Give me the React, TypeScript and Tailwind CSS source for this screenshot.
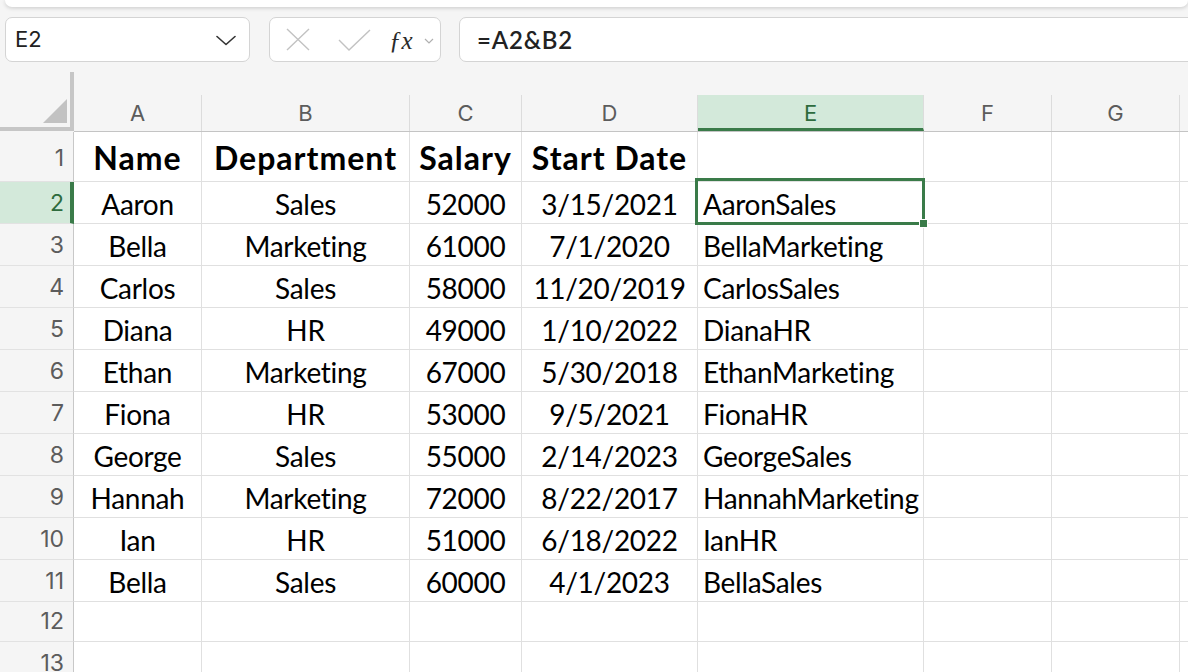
import React from "react";

const cols = [
  { key: "A", w: "w-[128px]" },
  { key: "B", w: "w-[208px]" },
  { key: "C", w: "w-[112px]" },
  { key: "D", w: "w-[176px]" },
  { key: "E", w: "w-[226px]" },
  { key: "F", w: "w-[128px]" },
  { key: "G", w: "w-[128px]" },
  { key: "H", w: "w-[128px]" },
];

const data: string[][] = [
  ["Name", "Department", "Salary", "Start Date", ""],
  ["Aaron", "Sales", "52000", "3/15/2021", "AaronSales"],
  ["Bella", "Marketing", "61000", "7/1/2020", "BellaMarketing"],
  ["Carlos", "Sales", "58000", "11/20/2019", "CarlosSales"],
  ["Diana", "HR", "49000", "1/10/2022", "DianaHR"],
  ["Ethan", "Marketing", "67000", "5/30/2018", "EthanMarketing"],
  ["Fiona", "HR", "53000", "9/5/2021", "FionaHR"],
  ["George", "Sales", "55000", "2/14/2023", "GeorgeSales"],
  ["Hannah", "Marketing", "72000", "8/22/2017", "HannahMarketing"],
  ["Ian", "HR", "51000", "6/18/2022", "IanHR"],
  ["Bella", "Sales", "60000", "4/1/2023", "BellaSales"],
  ["", "", "", "", ""],
  ["", "", "", "", ""],
];

const hdrFont = { fontFamily: "Inter, 'Liberation Sans', sans-serif" };
const cellFont = { fontFamily: "Lato, Carlito, 'Liberation Sans', sans-serif" };

export default function App() {
  return (
    <div className="w-[1188px] h-[672px] bg-[#f5f5f5] overflow-hidden relative">
      {/* top white panel */}
      <div className="ml-[5px] h-[7px] bg-white rounded-b-[9px] shadow-[0_1px_4px_rgba(0,0,0,0.18)]" />

      {/* toolbar */}
      <div className="flex mt-[10px] h-[45px]">
        <div className="ml-[5px] w-[245px] shrink-0 h-full bg-white border border-[#d4d4d4] rounded-[7px] flex items-center pl-[9px] pr-[13px]">
          <span className="text-[22px] text-[#222] flex-1" style={hdrFont}>E2</span>
          <svg width="20" height="11" viewBox="0 0 20 11" className="mt-[2px]">
            <path d="M1 1.5 L10 9.5 L19 1.5" fill="none" stroke="#333" strokeWidth="1.6" strokeLinecap="round" strokeLinejoin="round" />
          </svg>
        </div>
        <div className="ml-[19px] w-[172px] shrink-0 h-full bg-white border border-[#d4d4d4] rounded-[7px] flex items-center pl-[16px]">
          <svg width="24" height="23" viewBox="0 0 24 23">
            <path d="M1 1 L23 22 M23 1 L1 22" stroke="#c2c2c2" strokeWidth="1.4" fill="none" />
          </svg>
          <svg width="33" height="22" viewBox="0 0 33 22" className="ml-[28px]">
            <path d="M1 11 L11 21 L32 1" stroke="#c2c2c2" strokeWidth="1.4" fill="none" />
          </svg>
          <span
            className="ml-[18px] text-[25px] italic text-[#2a2a2a] leading-none mt-[2px]"
            style={{ fontFamily: "'Liberation Serif', 'DejaVu Serif', serif" }}
          >
            ƒx
          </span>
          <svg width="10" height="6" viewBox="0 0 10 6" className="ml-[11px] mt-[2px]">
            <path d="M1 1 L5 5 L9 1" stroke="#b0b0b0" strokeWidth="1.2" fill="none" />
          </svg>
        </div>
        <div className="ml-[18px] w-[760px] shrink-0 h-full bg-white border border-[#d4d4d4] rounded-l-[7px] flex items-center pl-[17px]">
          <span className="text-[24px] font-semibold text-[#222] tracking-[0.8px]" style={cellFont}>
            =A2&amp;B2
          </span>
        </div>
      </div>

      {/* grid */}
      <div className="mt-[10px] relative">
        {/* column header */}
        <div className="flex h-[60px]">
          <div className="w-[74px] h-[59px] shrink-0 border-r-[4px] border-b-[4px] border-[#c6c6c6] flex items-end justify-end pr-[3px] pb-[4px]">
            <svg width="24" height="24" viewBox="0 0 24 24">
              <path d="M24 0 L24 24 L0 24 Z" fill="#c2c2c2" />
            </svg>
          </div>
          {cols.map((c) => (
            <div key={c.key} className={`${c.w} shrink-0 h-[60px] flex flex-col justify-end border-b border-[#c4c4c4]`}>
              <div
                className={
                  c.key === "E"
                    ? "h-[36px] bg-[#d3e9da] border-b-[3px] border-[#3a7b49] flex items-center justify-center text-[22px] text-[#2e6b3d] border-r border-r-[#dcdcdc]"
                    : "h-[36px] border-r border-[#dcdcdc] flex items-center justify-center text-[22px] text-[#5c5c5c]"
                }
                style={hdrFont}
              >
                <span className={c.key === "E" ? "mt-[4px]" : "mt-[1px]"}>{c.key}</span>
              </div>
            </div>
          ))}
        </div>

        {/* rows */}
        {data.map((row, ri) => {
          const h = ri === 0 ? "h-[50px]" : ri === 11 ? "h-[40px]" : "h-[42px]";
          const selRow = ri === 1;
          return (
            <div key={ri} className={`flex ${h}`}>
              <div
                className={
                  selRow
                    ? "w-[74px] shrink-0 h-full bg-[#d3e9da] border-r-[4px] border-[#3a7b49] border-b border-b-[#e2e2e2] flex items-end justify-end pr-[6px] pb-[3px] text-[23px] text-[#2e6b3d]"
                    : `w-[74px] shrink-0 h-full border-r border-[#c8c8c8] border-b border-b-[#e2e2e2] flex items-end justify-end pr-[9px] ${ri === 0 ? "pb-[6px]" : "pb-[3px]"} text-[23px] text-[#5c5c5c]`
                }
                style={hdrFont}
              >
                {ri + 1}
              </div>
              {cols.map((c, ci) => {
                const v = ci < 5 ? row[ci] : "";
                const isE = c.key === "E";
                return (
                  <div
                    key={c.key}
                    className={`${c.w} shrink-0 h-full bg-white border-r border-b border-[#e0e0e0] flex items-end ${
                      isE ? "justify-start pl-[5px]" : "justify-center"
                    } ${ri === 0 ? "pb-[5px]" : "pb-[2px]"} relative`}
                    style={cellFont}
                  >
                    <span
                      className={`${
                        ri === 0
                          ? "font-bold text-[32px] tracking-[1px] leading-[36px]"
                          : "text-[28px] leading-[34px] tracking-[-0.3px]"
                      } text-black whitespace-nowrap`}
                    >
                      {v}
                    </span>
                    {isE && selRow && (
                      <>
                        <div className="absolute z-10 -left-[3px] -top-[4px] -right-[2px] -bottom-[2px] border-[3px] border-[#3a7b49] pointer-events-none" />
                        <div className="absolute z-20 -right-[5px] -bottom-[5px] w-[9px] h-[9px] bg-[#3a7b49] border border-white" />
                      </>
                    )}
                  </div>
                );
              })}
            </div>
          );
        })}
      </div>
    </div>
  );
}
